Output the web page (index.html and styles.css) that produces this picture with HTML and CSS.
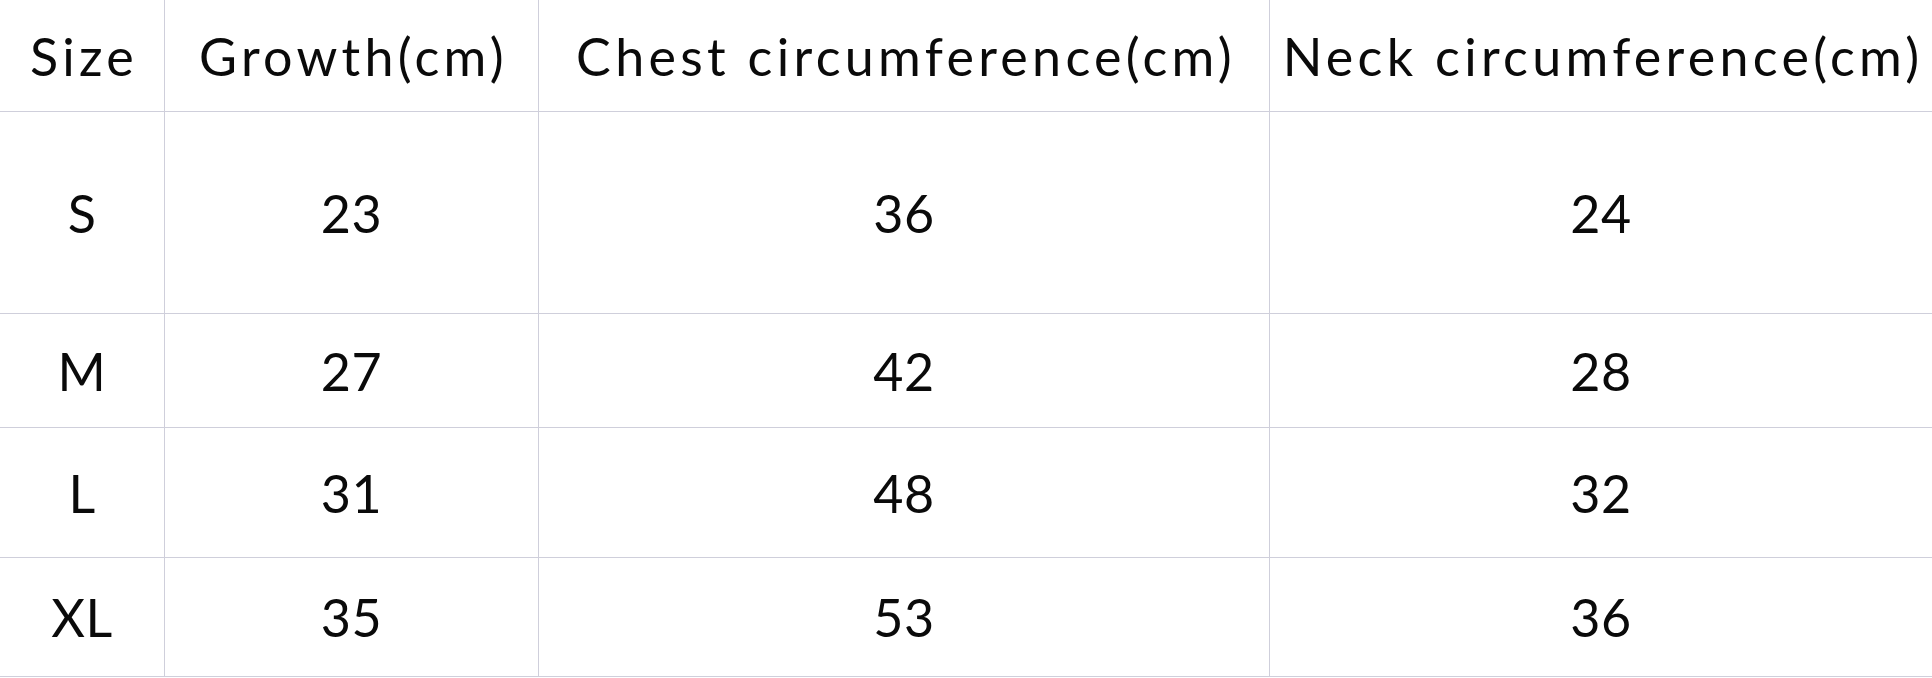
FILE: index.html
```html
<!DOCTYPE html>
<html lang="en">
<head>
<meta charset="utf-8">
<title>Size chart</title>
<link rel="stylesheet" href="styles.css">
</head>
<body>
<div class="chart">
  <div class="row row-head">
    <div class="cell">Size</div>
    <div class="cell">Growth(cm)</div>
    <div class="cell">Chest circumference(cm)</div>
    <div class="cell">Neck circumference(cm)</div>
  </div>
  <div class="row row-s">
    <div class="cell">S</div>
    <div class="cell">23</div>
    <div class="cell">36</div>
    <div class="cell">24</div>
  </div>
  <div class="row row-m">
    <div class="cell">M</div>
    <div class="cell">27</div>
    <div class="cell">42</div>
    <div class="cell">28</div>
  </div>
  <div class="row row-l">
    <div class="cell">L</div>
    <div class="cell">31</div>
    <div class="cell">48</div>
    <div class="cell">32</div>
  </div>
  <div class="row row-xl">
    <div class="cell">XL</div>
    <div class="cell">35</div>
    <div class="cell">53</div>
    <div class="cell">36</div>
  </div>
</div>
</body>
</html>
```
FILE: styles.css
```css
html, body {
  margin: 0;
  padding: 0;
  background: #ffffff;
}

.chart {
  width: 1932px;
  font-family: "Lato", "Liberation Sans", sans-serif;
  font-weight: 400;
  font-size: 52px;
  color: #0a0a0a;
  letter-spacing: 0.5px;
}

.row {
  display: grid;
  grid-template-columns: 165px 374px 731px 662px;
  border-bottom: 1px solid #cfcfdb;
  box-sizing: border-box;
}

.cell {
  display: flex;
  align-items: center;
  justify-content: center;
  white-space: nowrap;
  border-right: 1px solid #cfcfdb;
}

.cell:last-child {
  border-right: none;
}

.row-head {
  height: 112px;
  letter-spacing: 4.3px;
}

.row-head .cell {
  padding-left: 4px;
}

.row-s { height: 202px; }
.row-m { height: 114px; }
.row-l { height: 130px; }
.row-xl { height: 119px; }
```
